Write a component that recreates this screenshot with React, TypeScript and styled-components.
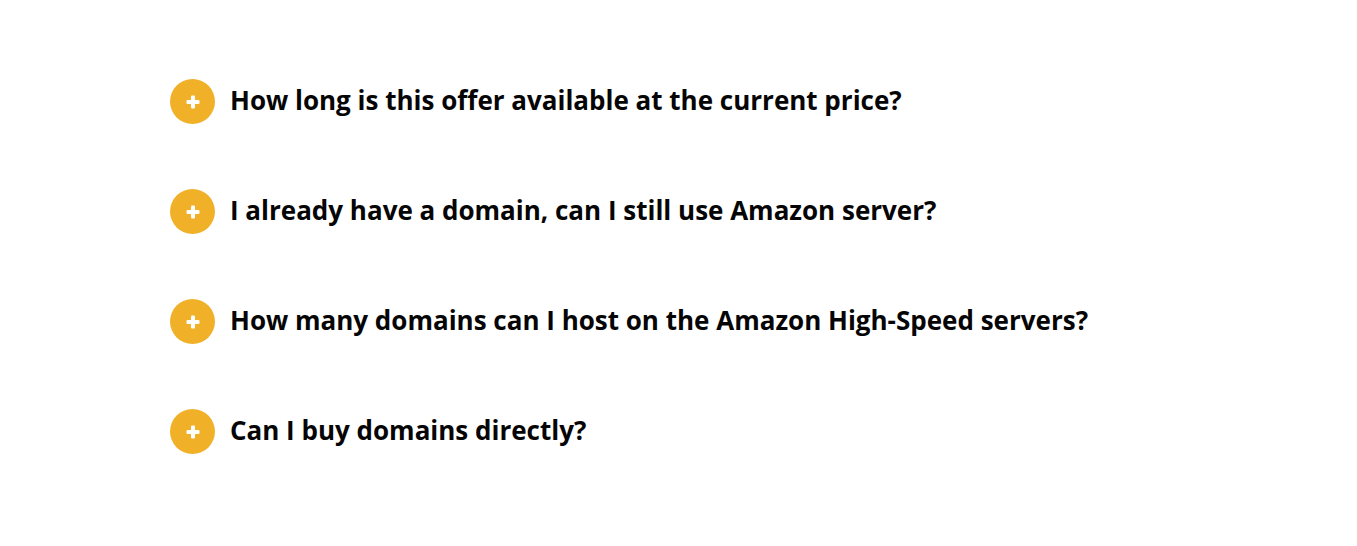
import React from 'react';
import styled, { createGlobalStyle } from 'styled-components';

const GlobalStyle = createGlobalStyle`
  body {
    margin: 0;
    background: #ffffff;
    font-family: "Open Sans", "Liberation Sans", sans-serif;
  }
`;

const FaqList = styled.section`
  display: flex;
  flex-direction: column;
  gap: 65px;
  padding: 79px 0 0 170px;
`;

const FaqItem = styled.div`
  display: flex;
  align-items: center;
  gap: 15px;
  cursor: pointer;
`;

const Toggle = styled.span`
  position: relative;
  flex: none;
  width: 45px;
  height: 45px;
  border-radius: 50%;
  background: #f0b128;

  &::before,
  &::after {
    content: '';
    position: absolute;
    left: 50%;
    top: 50%;
    background: #ffffff;
    border-radius: 1px;
    transform: translate(-50%, -50%);
  }

  &::before {
    width: 13px;
    height: 4px;
  }

  &::after {
    width: 4px;
    height: 13px;
  }
`;

const Question = styled.h3`
  margin: 0 0 1px;
  font-size: 26px;
  font-weight: 700;
  color: #050505;
  line-height: 1.2;
`;

const questions = [
  'How long is this offer available at the current price?',
  'I already have a domain, can I still use Amazon server?',
  'How many domains can I host on the Amazon High-Speed servers?',
  'Can I buy domains directly?',
];

const App: React.FC = () => {
  return (
    <>
      <GlobalStyle />
      <FaqList>
        {questions.map((q) => (
          <FaqItem key={q}>
            <Toggle />
            <Question>{q}</Question>
          </FaqItem>
        ))}
      </FaqList>
    </>
  );
};

export default App;
